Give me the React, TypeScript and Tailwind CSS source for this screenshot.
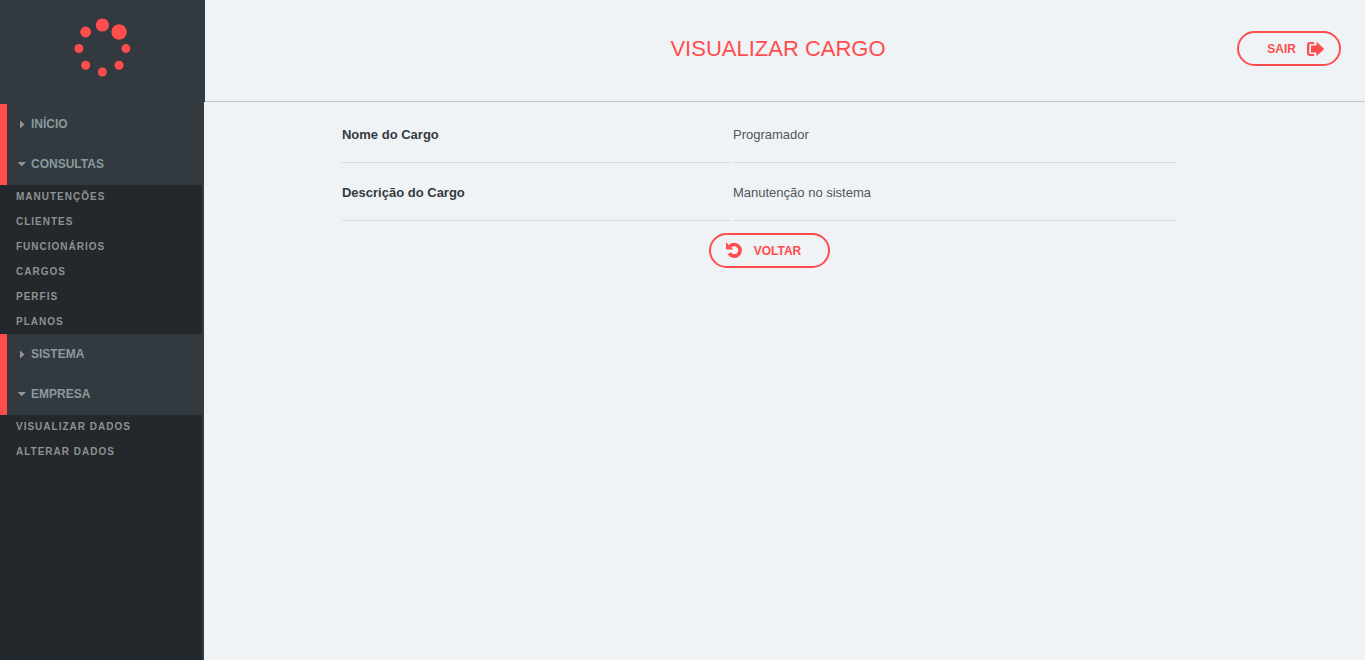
import type { ReactNode } from "react";

const sections = [
  {
    closed: "INÍCIO",
    open: "CONSULTAS",
    items: ["MANUTENÇÕES", "CLIENTES", "FUNCIONÁRIOS", "CARGOS", "PERFIS", "PLANOS"],
  },
  { closed: "SISTEMA", open: "EMPRESA", items: ["VISUALIZAR DADOS", "ALTERAR DADOS"] },
];

const fields = [
  { label: "Nome do Cargo", value: "Programador" },
  { label: "Descrição do Cargo", value: "Manutenção no sistema" },
];

function Logo() {
  return (
    <svg viewBox="0 0 60 60" className="size-[60px]" fill="#ff4d4d" role="img" aria-label="Logo">
      <circle cx="30.4" cy="8" r="6.6" />
      <circle cx="47.1" cy="15" r="7.7" />
      <circle cx="53.9" cy="31.5" r="4.4" />
      <circle cx="47.1" cy="48.3" r="4.5" />
      <circle cx="30.4" cy="55" r="4.5" />
      <circle cx="13.7" cy="48.3" r="4.5" />
      <circle cx="6.9" cy="31.5" r="4.5" />
      <circle cx="13.7" cy="15" r="5.4" />
    </svg>
  );
}

function LogOutIcon() {
  return (
    <svg viewBox="0 0 18 14" className="h-[14px] w-[18px]" fill="currentColor" aria-hidden="true">
      <path d="M7 0H3a3 3 0 0 0-3 3v8a3 3 0 0 0 3 3h4v-2H3.300a1 1 0 0 1-1-1V3a1 1 0 0 1 1-1H7z" />
      <path d="M9.500.8Q9.500-.2 10.400.5L16.700 6.400Q17.300 7 16.700 7.600L10.400 13.500Q9.500 14.200 9.500 13.200V10.500H4v-7h5.500z" />
    </svg>
  );
}

function UndoIcon() {
  return (
    <svg viewBox="0 0 18 18" className="size-[18px]" aria-hidden="true">
      <path d="M5 4.400A5.800 5.800 0 1 1 4.300 11.300" fill="none" stroke="currentColor" strokeWidth="3.600" />
      <path d="M1 .2 8.300 7.500H1.800Q1 7.500 1 6.700z" fill="currentColor" />
    </svg>
  );
}

function MenuToggle({ label, expanded }: { label: string; expanded: boolean }) {
  return (
    <button
      type="button"
      aria-expanded={expanded}
      className="flex h-10 w-full cursor-pointer items-center gap-1 pl-[10px] text-left text-xs font-bold text-[#8a999d]"
    >
      <svg viewBox="0 0 10 8" className="h-2 w-[10px]" fill="#999398" aria-hidden="true">
        <path d={expanded ? "M.500 2h8.500L4.700 6.200z" : "M3 .5v8l4.500-4z"} />
      </svg>
      {label}
    </button>
  );
}

function PillButton({ children, className }: { children: ReactNode; className: string }) {
  return (
    <button
      type="button"
      className={`flex h-[35px] cursor-pointer items-center rounded-full border-2 border-[#ff4d4d] text-xs font-bold text-[#ff4d4d] ${className}`}
    >
      {children}
    </button>
  );
}

export default function App() {
  return (
    <div className="flex min-h-screen flex-col bg-[#eff3f6] font-['Liberation_Sans',Arial,sans-serif]">
      <header className="flex h-[102px]">
        <div className="flex w-[205px] shrink-0 justify-center bg-[#32393f] pt-[17px] pr-px">
          <Logo />
        </div>
        <div className="grid flex-1 grid-cols-[1fr_auto_1fr] items-center border-b border-[#bcc7cd] pr-6 pb-1 pl-[10px]">
          <h1 className="col-start-2 text-[22px] leading-8 text-[#ff4d4d]">VISUALIZAR CARGO</h1>
          <PillButton className="justify-self-end gap-[11px] pr-[14px] pl-7">
            SAIR
            <LogOutIcon />
          </PillButton>
        </div>
      </header>
      <div className="flex flex-1">
        <nav className="w-[204px] shrink-0 border-r-2 border-[#343b3f] bg-[#22282b]">
          <div className="h-[2px] bg-[#32393f]" />
          {sections.map((section) => (
            <section key={section.open}>
              <div className="border-l-[7px] border-[#ff4d4d] bg-[#32393f] pb-px">
                <MenuToggle label={section.closed} expanded={false} />
                <MenuToggle label={section.open} expanded />
              </div>
              <ul className="flex flex-col gap-px">
                {section.items.map((item) => (
                  <li key={item}>
                    <a
                      href="#"
                      className="flex h-6 items-center pb-[2px] pl-4 text-[10px] font-bold tracking-widest text-[#8f9192]"
                    >
                      {item}
                    </a>
                  </li>
                ))}
              </ul>
            </section>
          ))}
        </nav>
        <main className="flex flex-1 flex-col items-center gap-3 pt-[3px] pr-[30px]">
          <dl className="flex w-[75.6%] flex-col pr-5 text-[13px]">
            {fields.map((field) => (
              <div key={field.label} className="grid h-[58px] grid-cols-[389fr_444fr] gap-[2px] leading-5">
                <dt className="border-b border-[#d9dcde] pt-5 font-bold text-[#343b40]">{field.label}</dt>
                <dd className="border-b border-[#d9dcde] pt-5 text-[#525559]">{field.value}</dd>
              </div>
            ))}
          </dl>
          <PillButton className="gap-[11px] pr-[27px] pl-[14px]">
            <UndoIcon />
            VOLTAR
          </PillButton>
        </main>
      </div>
    </div>
  );
}
